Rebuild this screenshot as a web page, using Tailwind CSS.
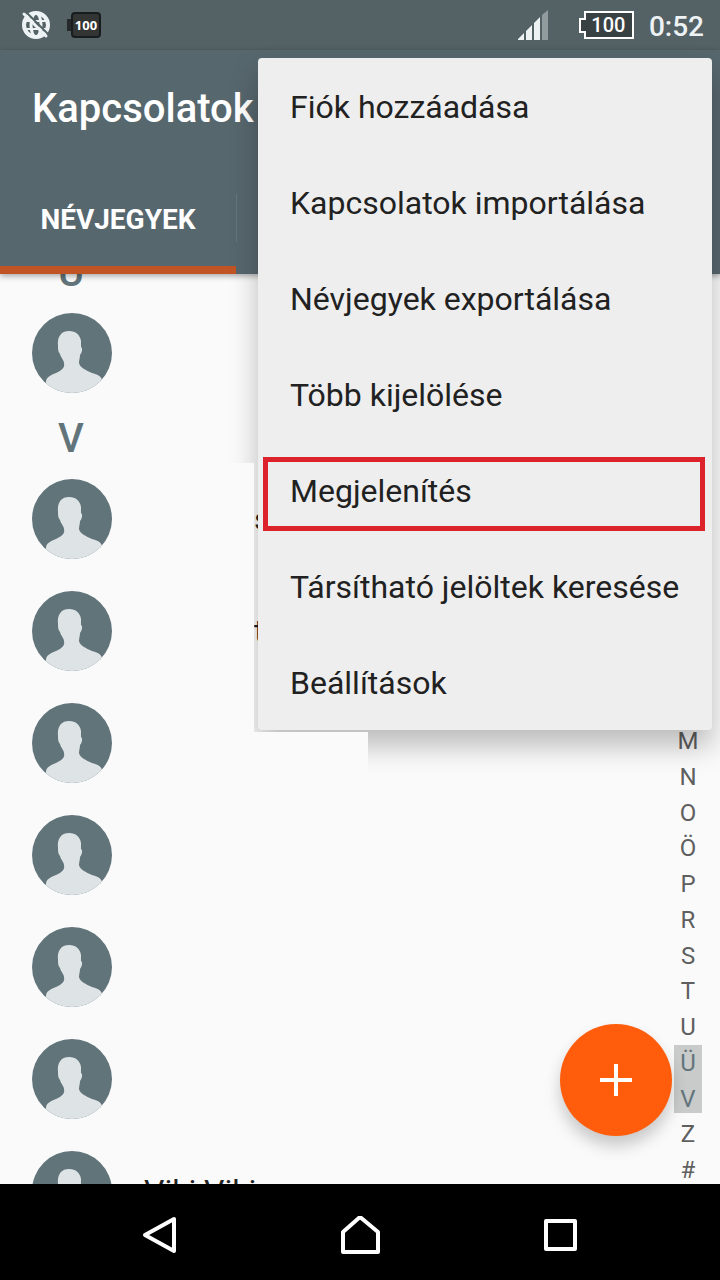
<!DOCTYPE html>
<html lang="hu">
<head>
    <meta charset="UTF-8">
    <meta name="viewport" content="width=device-width, initial-scale=1">
    <title>Kapcsolatok</title>
    <script src="https://cdn.jsdelivr.net/npm/@tailwindcss/browser@4"></script>
</head>
<body class="relative flex flex-col h-screen overflow-hidden bg-[#fafafa] font-['Roboto',sans-serif] text-[#212121]">

<!-- avatar shared by all contacts -->
<svg class="hidden">
    <symbol id="avatar" viewBox="0 0 80 80">
        <rect width="80" height="80" fill="#61747a"/>
        <path fill="#dee4e6" d="M37 18C44 18 48 22 49 28L49 34C51 35 50 40 48 42C48 45 47 47 47 50C48 55 54 57 60 60C67 62 70 64 70 68V80H14V69C14 64 19 62 24 60C30 57 33 55 32 50C32 47 29 45 28 41C26 39 26 36 26 33C25 24 29 18 37 18Z"/>
    </symbol>
</svg>

<!-- status bar -->
<div class="flex items-center shrink-0 h-[50px] pl-5 pr-4 bg-[#546266] text-white">
    <svg class="w-8 h-8" viewBox="0 0 32 32" fill="none" stroke="#edf3f5" stroke-width="4">
        <circle cx="16" cy="16" r="12"/>
        <ellipse cx="16" cy="16" rx="5" ry="12" stroke-width="3"/>
        <path d="M5 12H27M5 20H27" stroke-width="2"/>
        <path d="M5 2L30 27" stroke="#546266" stroke-width="2"/>
        <path d="M4 5L26 27" stroke-width="3" stroke-linecap="round"/>
    </svg>
    <div class="flex items-center ml-[15px]">
        <div class="w-1 h-3 bg-[#25292a]"></div>
        <div class="w-[30px] h-[26px] rounded-sm border-2 border-[#181c1e] bg-[#333535] text-center font-['Open_Sans',sans-serif] font-bold text-[13px] leading-[22px]">100</div>
    </div>
    <svg class="w-[30px] h-[30px] ml-auto" viewBox="0 0 30 30" fill="#edf2f3">
        <path d="M0 30V29L6 23V30ZM8 30V21L14 15V30ZM16 30V13L22 7V30Z"/>
        <path d="M24 30V5L30 0V30Z" fill="#929c9e"/>
    </svg>
    <div class="relative w-[55px] h-7 ml-[31px]">
        <svg class="w-full h-full" viewBox="0 0 55 28" fill="#394143" stroke="#fff" stroke-width="2">
            <path d="M6 1H54V27H6V21H1V8H6Z"/>
        </svg>
        <span class="absolute inset-y-0 left-3 right-2 text-center text-xl leading-7 font-medium">100</span>
    </div>
    <time class="ml-[15px] pt-[3px] text-[28px] leading-8 font-medium text-[#edf2f5]">0:52</time>
</div>

<!-- toolbar and tabs -->
<header class="relative z-10 shrink-0 bg-[#57676e] text-white shadow-[0_2px_6px_rgba(0,0,0,0.35)]">
    <h1 class="h-[114px] pl-8 text-[40px] leading-[118px] font-medium">Kapcsolatok</h1>
    <nav class="flex items-start">
        <button class="w-[236px] h-[110px] pt-2.5 border-b-8 border-[#c15424] text-[28px] font-bold">NÉVJEGYEK</button>
        <div class="w-px h-12 mt-[30px] bg-[#67777e]"></div>
    </nav>
</header>

<main class="relative flex-1 min-h-0 overflow-hidden">
    <div class="-mt-[31px]">
        <h2 class="w-[142px] h-[54px] text-center text-[40px] leading-[60px] font-medium text-[#61747a]">Ü</h2>
        <ul>
            <li class="flex items-center h-28 px-8"><svg class="w-20 h-20 rounded-full"><use href="#avatar"/></svg></li>
        </ul>
        <h2 class="w-[142px] h-[54px] text-center text-[40px] leading-[60px] font-medium text-[#61747a]">V</h2>
        <ul class="text-[32px]">
            <li class="flex items-center h-28 px-8"><svg class="w-20 h-20 rounded-full"><use href="#avatar"/></svg><span class="ml-[142px]">s</span></li>
            <li class="flex items-center h-28 px-8"><svg class="w-20 h-20 rounded-full"><use href="#avatar"/></svg><span class="ml-[142px]">t</span></li>
            <li class="flex items-center h-28 px-8"><svg class="w-20 h-20 rounded-full"><use href="#avatar"/></svg><span class="ml-[145px]">i</span></li>
            <li class="flex items-center h-28 px-8"><svg class="w-20 h-20 rounded-full"><use href="#avatar"/></svg></li>
            <li class="flex items-center h-28 px-8"><svg class="w-20 h-20 rounded-full"><use href="#avatar"/></svg></li>
            <li class="flex items-center h-28 px-8"><svg class="w-20 h-20 rounded-full"><use href="#avatar"/></svg></li>
            <li class="flex items-center h-28 px-8"><svg class="w-20 h-20 rounded-full"><use href="#avatar"/></svg><span class="ml-8">Viki Viki</span></li>
        </ul>
    </div>

    <!-- alphabet index -->
    <nav class="absolute top-5 -bottom-1 right-[18px] w-7 flex flex-col text-center text-2xl text-[#5f5f5f] *:flex *:flex-1 *:min-h-0 *:items-center *:justify-center">
        <a href="#">A</a>
        <a href="#">B</a>
        <a href="#">C</a>
        <a href="#">D</a>
        <a href="#">E</a>
        <a href="#">F</a>
        <a href="#">G</a>
        <a href="#">H</a>
        <a href="#">I</a>
        <a href="#">J</a>
        <a href="#">K</a>
        <a href="#">L</a>
        <a href="#">M</a>
        <a href="#">N</a>
        <a href="#">O</a>
        <a href="#">Ö</a>
        <a href="#">P</a>
        <a href="#">R</a>
        <a href="#">S</a>
        <a href="#">T</a>
        <a href="#">U</a>
        <a href="#" class="bg-[#c9caca] text-[#63757b]">Ü</a>
        <a href="#" class="bg-linear-to-t from-transparent from-10% to-[#c9caca] to-10% text-[#63757b]">V</a>
        <a href="#">Z</a>
        <a href="#">#</a>
    </nav>

    <button aria-label="Új névjegy" class="absolute right-12 bottom-12 flex items-center justify-center w-28 h-28 rounded-full bg-[#ff5d0b] shadow-[0_10px_16px_rgba(0,0,0,0.2)]">
        <svg class="w-8 h-8" viewBox="0 0 32 32" stroke="#fff" stroke-width="4"><path d="M16 0V32M0 16H32"/></svg>
    </button>
</main>

<!-- system navigation -->
<footer class="relative z-10 flex items-center justify-center gap-40 shrink-0 h-24 pt-2 bg-black">
    <button aria-label="Vissza">
        <svg class="w-10 h-10" viewBox="0 0 40 40" fill="none" stroke="#fff" stroke-width="4" stroke-linejoin="round"><path d="M34 3V35L5 19Z"/></svg>
    </button>
    <button aria-label="Kezdőképernyő">
        <svg class="w-10 h-10" viewBox="0 0 40 40" fill="none" stroke="#fff" stroke-width="4" stroke-linejoin="round"><path d="M20 1L38 16V36H3V16Z"/></svg>
    </button>
    <button aria-label="Áttekintés">
        <svg class="w-10 h-10" viewBox="0 0 40 40" fill="none" stroke="#fff" stroke-width="4" stroke-linejoin="round"><path d="M6 5H35V33H6Z"/></svg>
    </button>
</footer>

<!-- overflow menu -->
<div class="absolute z-20 top-[58px] right-2 w-[454px]">
    <div class="rounded bg-[#eee] shadow-[0_16px_28px_rgba(0,0,0,0.25)] text-[32px] *:block *:w-full *:h-24 *:px-8 *:pt-[2px] *:text-left *:whitespace-nowrap">
        <button>Fiók hozzáadása</button>
        <button>Kapcsolatok importálása</button>
        <button>Névjegyek exportálása</button>
        <button>Több kijelölése</button>
        <button class="relative">Megjelenítés<span class="absolute top-[15px] bottom-[7px] left-[5px] right-[7px] border-5 border-[#dc232b]"></span></button>
        <button>Társítható jelöltek keresése</button>
        <button>Beállítások</button>
    </div>
    <!-- blanked out names -->
    <div class="absolute top-[405px] -bottom-[2px] right-full w-28 mr-1 bg-[#fafafa]"></div>
    <div class="absolute top-full -left-28 w-[222px] h-16 mt-[2px] bg-[#fafafa]"></div>
</div>

</body>
</html>
